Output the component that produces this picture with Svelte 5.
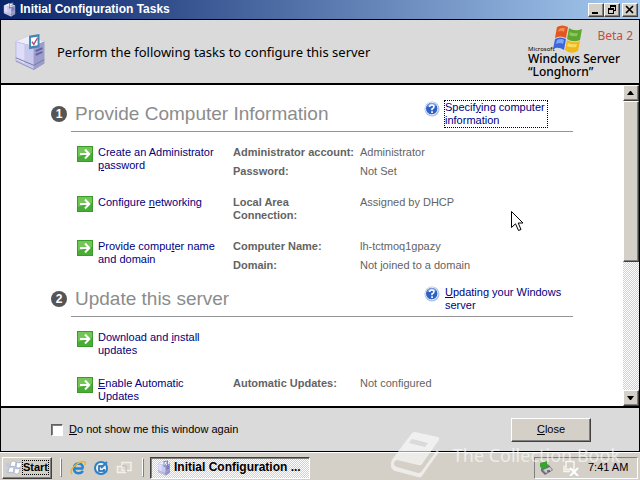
<script lang="ts">
	type Detail = { label: string; value: string };
	// text is [before, access key, after]
	type Task = { text: [string, string, string]; details: Detail[] };
	type Section = { title: string; help: [string, string, string]; focused: boolean; tasks: Task[] };

	const sections: Section[] = [
		{
			title: 'Provide Computer Information',
			help: ['Specif', 'y', 'ing computer information'],
			focused: true,
			tasks: [
				{
					text: ['Create an Administrator ', 'p', 'assword'],
					details: [
						{ label: 'Administrator account:', value: 'Administrator' },
						{ label: 'Password:', value: 'Not Set' }
					]
				},
				{
					text: ['Configure ', 'n', 'etworking'],
					details: [{ label: 'Local Area Connection:', value: 'Assigned by DHCP' }]
				},
				{
					text: ['Provide compu', 't', 'er name and domain'],
					details: [
						{ label: 'Computer Name:', value: 'lh-tctmoq1gpazy' },
						{ label: 'Domain:', value: 'Not joined to a domain' }
					]
				}
			]
		},
		{
			title: 'Update this server',
			help: ['', 'U', 'pdating your Windows server'],
			focused: false,
			tasks: [
				{ text: ['Download and ', 'i', 'nstall updates'], details: [] },
				{
					text: ['', 'E', 'nable Automatic Updates'],
					details: [{ label: 'Automatic Updates:', value: 'Not configured' }]
				}
			]
		}
	];

	let hideWindow = $state(false);
</script>

{#snippet server(size: number)}
	<svg width={size} height={size} viewBox="0 0 36 40" aria-hidden="true">
		<path d="M3 9 L17 3 L33 9 L33 32 L22 39 L3 30 Z" fill="#8f8fc0" />
		<path d="M3 9 L17 3 L33 9 L22 14 Z" fill="#eeeefb" />
		<path d="M3 9 L22 14 V38 L3 29 Z" fill="#c9c9ee" />
		<path d="M4 10 L12 12 V32 L4 28 Z" fill="#dedef8" />
		<path d="M22 14 L33 9 V32 L22 38 Z" fill="#9c9ccd" />
		<path d="M3 26 L22 34 L33 28" fill="none" stroke="#77779f" />
		<path d="M24 19 L31 16 M24 23 L31 20" stroke="#6161a0" stroke-width="2" />
		<path d="M17 3 L28 1 V15 L17 17 Z" fill="#3f88b4" />
		<path d="M19 5 L26 4 V13 L19 14 Z" fill="#fff" />
		<path d="M20 9 L22 12 L26 5" fill="none" stroke="#b54a7a" stroke-width="1.5" />
	</svg>
{/snippet}

{#snippet keyed(text: [string, string, string])}{text[0]}<u>{text[1]}</u>{text[2]}{/snippet}

<div class="desktop">
	<div class="window">
		<div class="titlebar">
			{@render server(15)}
			<span class="caption">Initial Configuration Tasks</span>
			<button aria-label="Minimize">
				<svg width="12" height="10" viewBox="0 0 12 10"><path d="M2 7h6v2H2z" /></svg>
			</button>
			<button aria-label="Restore">
				<svg width="12" height="10" viewBox="0 0 12 10">
					<path d="M4 0h6v6H8V5h1V2H5v1H4zM2 3h6v6H2zM3 5v3h4V5z" fill-rule="evenodd" />
				</svg>
			</button>
			<button class="x" aria-label="Close window">
				<svg width="12" height="10" viewBox="0 0 12 10">
					<path d="M2 1 L9 8 M9 1 L2 8" stroke="#000" stroke-width="1.7" />
				</svg>
			</button>
		</div>

		<header>
			{@render server(38)}
			<h1>Perform the following tasks to configure this server</h1>
			<div class="brand">
				<div class="brand-top">
					<span class="ms">Microsoft</span>
					<svg width="31" height="28" viewBox="0 0 31 28" aria-hidden="true">
						<path d="M5 2 Q10 -1 16 2 L14 13 Q8 10 3 13 Z" fill="#e2571f" />
						<path d="M17 3 Q23 7 30 4 L28 15 Q21 18 15 14 Z" fill="#5fa62f" />
						<path d="M3 14 Q8 11 14 14 L12 25 Q6 21 1 24 Z" fill="#3e66dc" />
						<path d="M15 15 Q21 19 28 16 L26 26 Q19 30 13 25 Z" fill="#f1b81c" />
						<path d="M7 4 Q10 2 13 3 L12 7 Q9 5 6 7 Z" fill="#f28b55" />
						<path d="M5 15 Q9 13 12 15 L11 19 Q8 17 4 19 Z" fill="#7ea8f5" />
						<path d="M18 7 Q22 9 26 8 L25 11 Q21 12 17 10 Z" fill="#8cc65a" />
						<path d="M16 18 Q20 20 25 19 L24 22 Q19 23 15 21 Z" fill="#fbdc62" />
					</svg>
					<span class="beta">Beta 2</span>
				</div>
				<div class="product">Windows Server<br />“Longhorn”</div>
			</div>
		</header>

		<div class="body">
			<main>
				{#each sections as section, i}
					<section>
						<span class="number">{i + 1}</span>
						<div class="head">
							<h2>{section.title}</h2>
							<div class="help">
								<svg width="16" height="16" viewBox="0 0 16 16" aria-hidden="true">
									<circle cx="8" cy="8" r="7.5" fill="#a9c0e6" />
									<circle cx="7.7" cy="7.6" r="6.2" fill="#2f61c4" stroke="#e8f0ff" />
									<path d="M3 6 Q4 2 8 2 Q11 2 12 5 Q7 4 3 6" fill="#7fa5e8" />
									<path
										d="M5.6 6 Q5.8 4 7.8 4 Q10 4 10 5.8 Q10 7 8 8 V9.3"
										fill="none"
										stroke="#fff"
										stroke-width="1.6"
									/>
									<path d="M7.2 10.3h1.7v1.7H7.2z" fill="#fff" />
								</svg>
								<a href="#help" class:focused={section.focused}>{@render keyed(section.help)}</a>
							</div>
						</div>
						<div class="tasks">
							{#each section.tasks as task}
								<div class="task">
									<svg width="16" height="16" viewBox="0 0 16 16" aria-hidden="true">
										<rect width="16" height="16" fill="#3c9a2d" />
										<path d="M1 1h14v6L1 11z" fill="#72c655" />
										<path d="M1 11L15 7v8H1z" fill="#48ad35" />
										<path d="M3 8h9M8 3.5L12.3 8L8 12.5" fill="none" stroke="#fff" stroke-width="2" />
									</svg>
									<a href="#task">{@render keyed(task.text)}</a>
									<dl>
										{#each task.details as detail}
											<dt>{detail.label}</dt>
											<dd>{detail.value}</dd>
										{/each}
									</dl>
								</div>
							{/each}
						</div>
					</section>
				{/each}
			</main>
			<div class="scrollbar">
				<button aria-label="Scroll up">
					<svg width="8" height="4" viewBox="0 0 8 4"><path d="M0 4h7L4 0H3z" /></svg>
				</button>
				<div class="thumb"></div>
				<div class="track"></div>
				<button aria-label="Scroll down">
					<svg width="8" height="4" viewBox="0 0 8 4"><path d="M0 0h7L4 4H3z" /></svg>
				</button>
			</div>
		</div>

		<footer>
			<label>
				<input type="checkbox" bind:checked={hideWindow} />
				<span><u>D</u>o not show me this window again</span>
			</label>
			<button class="close"><span><u>C</u>lose</span></button>
		</footer>
	</div>

	<div class="taskbar">
		<button class="start">
			<svg width="16" height="15" viewBox="0 0 16 15" aria-hidden="true">
				<path d="M0 4h4M0 6h4M0 10h3M0 12h2" stroke="#b5c3e2" />
				<path
					d="M5 2 Q7 0 10 2 L9 7 Q6 5 4 7Z M11 2 Q13 4 16 2 L15 7 Q12 9 10 7Z M3 8 Q6 6 8 8 L7 13 Q5 11 2 13Z M9 8 Q12 10 14 8 L13 13 Q11 15 8 13Z"
					fill="#fff"
					stroke="#8fa3cf"
					stroke-width="0.6"
				/>
			</svg>
			<span>Start</span>
		</button>
		<span class="grip"></span>
		<div class="quick">
			<svg width="16" height="16" viewBox="0 0 16 16" aria-hidden="true">
				<path
					d="M13.5 8.5H4.5 M13 8 Q12.5 3.5 8.5 3.5 Q4 3.7 4 8.5 Q4 13 8.5 13.2 Q11.5 13.2 13 11"
					fill="none"
					stroke="#2585d5"
					stroke-width="2.5"
				/>
				<path d="M2 14 Q-1 11 5 5.5 Q12 0 15 2 Q16 3 14.5 5" fill="none" stroke="#e8b52c" stroke-width="1.5" />
			</svg>
			<svg width="16" height="16" viewBox="0 0 16 16" aria-hidden="true">
				<path d="M2 3l9-2 4 4v8l-5 2-8-1z" fill="#9cc9ec" />
				<circle cx="8" cy="8" r="6" fill="#e5f2ff" stroke="#2d7fc4" stroke-width="2" />
				<path d="M10 6H6v5h5V9" fill="none" stroke="#1a5da0" stroke-width="1.5" />
				<path d="M8 8l6-6" stroke="#2d7fc4" stroke-width="2" />
			</svg>
			<svg width="16" height="16" viewBox="0 0 16 16" aria-hidden="true">
				<path d="M6 2.5h9v8H6zM1.5 6.5h8v6h-8z" fill="#d8d4cc" stroke="#f2f0ec" stroke-width="1.5" />
				<path d="M6 6h4v6" fill="none" stroke="#b2aea6" />
			</svg>
		</div>
		<span class="grip"></span>
		<button class="running">
			{@render server(16)}
			<span>Initial Configuration ...</span>
		</button>
		<div class="tray">
			<svg width="16" height="16" viewBox="0 0 16 16" aria-hidden="true">
				<path d="M3 8l8-3 4 5-8 5-4-4z" fill="#6e7276" />
				<path d="M5 10l7-3 2 3-6 3z" fill="#c9cdd0" />
				<path d="M2 3l7-2v3l2 1-5 4-4-2z" fill="#35a52c" />
				<path d="M9 11h3" stroke="#222" />
			</svg>
			<svg width="16" height="16" viewBox="0 0 16 16" aria-hidden="true">
				<path d="M3 1.5h8v8H3zM1 5.5v6h6" fill="none" stroke="#f7f5f1" stroke-width="1.5" />
				<path d="M7 8l8 8M15 8l-8 8" stroke="#fff" stroke-width="2" />
			</svg>
			<time>7:41 AM</time>
		</div>
	</div>

	<div class="watermark">
		<svg width="50" height="46" viewBox="0 0 50 46" aria-hidden="true">
			<path
				fill-rule="evenodd"
				d="M22 1 Q23 0 25 0 L48 5 Q50 6 49 8 L32 32 Q31 34 28 33 L7 28 Q4 29 4 32 Q4 34 7 35 L28 41 Q30 41 31 40 L47 18 L49 20 L32 44 Q31 46 28 45 L5 39 Q0 37 1 31 Q1 28 4 25 Z M22 7 L19 11 L35 15 L38 11 Z"
			/>
		</svg>
		<span>The Collection Book</span>
	</div>

	<svg class="cursor" width="13" height="21" viewBox="0 0 13 21" aria-hidden="true">
		<path d="M.5 .5V16.5L4.5 12.8L7.5 19.5L10 18.5L7.2 12H12Z" fill="#fff" stroke="#000" />
	</svg>
</div>

<style>
	:global(body) {
		margin: 0;
	}

	.desktop {
		position: relative;
		display: flex;
		flex-direction: column;
		height: 100vh;
		overflow: hidden;
		font-family: 'Liberation Sans', Arial, sans-serif;
		font-size: 11px;
		line-height: 13px;
		background: #d4d0c8;
	}

	.window {
		flex: 1;
		min-height: 0;
		display: flex;
		flex-direction: column;
	}

	svg {
		flex: none;
		display: block;
	}

	button {
		box-sizing: border-box;
		padding: 0;
		font: inherit;
		color: #000;
		background: #d4d0c8;
		border: 1px solid;
		border-color: #fff #404040 #404040 #fff;
		box-shadow: inset -1px -1px #808080;
		display: flex;
		align-items: center;
		justify-content: center;
	}

	.titlebar {
		display: flex;
		align-items: center;
		height: 19px;
		padding: 0 2px;
		background: linear-gradient(to right, #0a246a, #a6caf0);
	}

	.caption {
		flex: 1;
		margin-left: 3px;
		color: #fff;
		font-size: 12px;
		font-weight: bold;
	}

	.titlebar button {
		width: 16px;
		height: 14px;
	}

	.titlebar .x {
		margin-left: 2px;
	}

	header {
		display: flex;
		align-items: center;
		height: 63px;
		padding: 0 6px 0 10px;
		background: #dadada;
		border: 1px solid #000;
		border-bottom-width: 2px;
	}

	h1 {
		flex: 1;
		margin: 0 0 0 8px;
		font: 13px/16px 'Noto Sans', sans-serif;
	}

	.brand {
		font-family: 'Noto Sans', sans-serif;
		width: 105px;
	}

	.brand-top {
		display: flex;
		height: 27px;
	}

	.ms {
		width: 24px;
		align-self: flex-end;
		font-size: 6px;
		line-height: 6px;
	}

	.beta {
		flex: 1;
		text-align: right;
		padding-top: 4px;
		font-size: 12px;
		color: #c44d48;
		white-space: nowrap;
	}

	.product {
		font-size: 12px;
		font-weight: 500;
		line-height: 13px;
		white-space: nowrap;
	}

	.body {
		flex: 1;
		min-height: 0;
		display: flex;
		background: #fff;
		border: solid #000;
		border-width: 0 1px;
	}

	main {
		flex: 1;
		overflow: hidden;
		padding: 16px 50px 0;
	}

	section {
		display: grid;
		grid-template-columns: 20px 1fr;
		margin-bottom: 14px;
	}

	.number {
		width: 16px;
		height: 16px;
		margin-top: 5px;
		border-radius: 50%;
		background: #555;
		color: #fff;
		font-size: 12px;
		font-weight: bold;
		line-height: 16px;
		text-align: center;
	}

	.head {
		display: flex;
		align-items: center;
		padding-bottom: 4px;
		border-bottom: 1px solid #949494;
	}

	h2 {
		flex: 1;
		margin: 0 0 0 4px;
		font-size: 19px;
		line-height: 26px;
		font-weight: normal;
		color: #8c8c8c;
	}

	.help {
		display: flex;
		gap: 5px;
		width: 149px;
	}

	.help a {
		max-width: 120px;
	}

	.help .focused {
		width: 102px;
		outline: 1px dotted #000;
	}

	a {
		color: #000080;
		text-decoration: none;
	}

	.tasks {
		grid-column: 2;
		display: flex;
		flex-direction: column;
		gap: 18px;
		padding: 14px 0 0 6px;
	}

	.task {
		display: grid;
		grid-template-columns: 16px 130px 1fr;
		column-gap: 5px;
	}

	.task a {
		padding: 0 5px 2px 0;
	}

	dl {
		display: grid;
		grid-template-columns: 122px 1fr;
		gap: 6px 5px;
		align-content: start;
		margin: 0;
		color: #636363;
	}

	dt {
		font-weight: bold;
	}

	dd {
		margin: 0;
	}

	.scrollbar {
		width: 16px;
		display: flex;
		flex-direction: column;
	}

	.scrollbar button {
		height: 16px;
	}

	.thumb {
		flex: 161;
		background: #d4d0c8;
		border: 1px solid;
		border-color: #fff #404040 #404040 #fff;
		box-shadow: inset -1px -1px #808080;
	}

	.track {
		flex: 129;
		background: repeating-conic-gradient(#fff 0 25%, #d4d0c8 0 50%) 0 0 / 2px 2px;
	}

	footer {
		display: flex;
		align-items: center;
		justify-content: space-between;
		height: 43px;
		padding: 0 48px 0 50px;
		background: #dadada;
		border: 1px solid #000;
		border-top-width: 2px;
	}

	label {
		display: flex;
		align-items: center;
		gap: 6px;
	}

	input {
		appearance: none;
		box-sizing: border-box;
		width: 12px;
		height: 12px;
		margin: 0;
		background: #fff;
		border: 1px solid;
		border-color: #606060 #fff #fff #606060;
		box-shadow: inset 1px 1px #808080;
	}

	.close {
		width: 80px;
		height: 24px;
	}

	.taskbar {
		box-sizing: border-box;
		display: flex;
		align-items: center;
		height: 28px;
		padding: 2px 2px 0;
		border-top: 1px solid #fff;
	}

	.start {
		width: 50px;
		height: 22px;
		font-weight: bold;
		gap: 1px;
	}

	.start span {
		outline: 1px dotted #000;
	}

	.grip {
		width: 2px;
		height: 19px;
		margin-left: 8px;
		border: 1px solid;
		border-color: #fff #808080 #808080 #fff;
		box-sizing: border-box;
	}

	.quick {
		display: flex;
		gap: 7px;
		padding: 0 2px 0 8px;
	}

	.running {
		width: 160px;
		height: 22px;
		margin-left: 6px;
		padding-left: 5px;
		justify-content: flex-start;
		gap: 2px;
		font-size: 12px;
		font-weight: bold;
		border-color: #404040 #fff #fff #404040;
		box-shadow: inset 1px 1px #808080;
		background: repeating-conic-gradient(#fff 0 25%, #d4d0c8 0 50%) 0 0 / 2px 2px;
	}

	.tray {
		box-sizing: border-box;
		display: flex;
		align-items: center;
		gap: 9px;
		width: 104px;
		height: 22px;
		margin-left: auto;
		padding-left: 3px;
		border: 1px solid;
		border-color: #808080 #fff #fff #808080;
		white-space: nowrap;
	}

	.watermark {
		position: absolute;
		right: 20px;
		bottom: 2px;
		display: flex;
		align-items: center;
		gap: 13px;
		color: #fff;
		fill: #fff;
		font: 18px/24px 'Noto Sans', sans-serif;
		opacity: 0.6;
		pointer-events: none;
	}

	.cursor {
		position: absolute;
		left: 511px;
		top: 211px;
	}
</style>
